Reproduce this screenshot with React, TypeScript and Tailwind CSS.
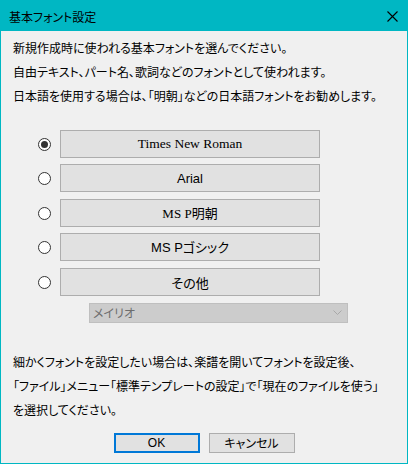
import { useState } from "react";

const jp = "font-['Noto_Sans_CJK_JP',sans-serif] [font-feature-settings:'palt']";

type Opt = { label: string; font: string; gap: string };

const options: Opt[] = [
  { label: "Times New Roman", font: "font-['Liberation_Serif',serif] text-[13.5px]", gap: "mt-0" },
  { label: "Arial", font: "font-['Liberation_Sans',sans-serif] text-[13px]", gap: "mt-[6px]" },
  { label: "MS P明朝", font: "font-['Liberation_Serif','Noto_Sans_CJK_JP',serif] text-[13px] [font-feature-settings:'palt']", gap: "mt-[7px]" },
  { label: "MS Pゴシック", font: "font-['Liberation_Sans','Noto_Sans_CJK_JP',sans-serif] text-[13px] [font-feature-settings:'palt']", gap: "mt-[6px]" },
  { label: "その他", font: `${jp} text-[13px]`, gap: "mt-[7px]" },
];

function Radio({ checked }: { checked: boolean }) {
  return (
    <span className="w-[13px] h-[13px] rounded-full border border-[#333333] bg-white flex items-center justify-center shrink-0">
      {checked && <span className="w-[7px] h-[7px] rounded-full bg-[#333333]" />}
    </span>
  );
}

export default function App() {
  const [selected, setSelected] = useState(0);

  return (
    <div className={`w-[408px] h-[464px] border border-[#00b7c3] bg-[#f0f0f0] flex flex-col text-black font-normal ${jp}`}>
      {/* タイトルバー */}
      <div className="h-[30px] bg-[#00b7c3] flex items-center justify-between pl-[8px] pr-[9px] shrink-0">
        <span className="text-[12px] leading-none pt-[1px]">基本フォント設定</span>
        <svg width="11" height="11" viewBox="0 0 11 11">
          <path d="M0.5 0.5 L10.5 10.5 M10.5 0.5 L0.5 10.5" stroke="#000" strokeWidth="1.1" />
        </svg>
      </div>

      {/* 説明 */}
      <div className="pt-[5px] pl-[12px] text-[12px] leading-[24px]">
        <p>新規作成時に使われる基本フォントを選んでください。</p>
        <p>自由テキスト、パート名、歌詞などのフォントとして使われます。</p>
        <p>日本語を使用する場合は、「明朝」などの日本語フォントをお勧めします。</p>
      </div>

      {/* フォント選択 */}
      <div className="mt-[22px] flex flex-col pl-[37px]">
        {options.map((o, i) => (
          <div key={o.label} className={`flex items-center gap-[9px] ${o.gap}`} onClick={() => setSelected(i)}>
            <Radio checked={selected === i} />
            <div
              className={`w-[260px] h-[28px] border border-[#adadad] bg-[#e1e1e1] font-normal leading-none flex items-center justify-center ${o.font}`}
            >
              {o.label}
            </div>
          </div>
        ))}
      </div>

      <div className="mt-[7px] ml-[88px] w-[259px] h-[20px] border border-[#bfbfbf] bg-[#cccccc] flex items-center justify-between pl-[3px] pr-[5px]">
        <span className="text-[12px] leading-none text-[#6d6d6d]">メイリオ</span>
        <svg width="9" height="6" viewBox="0 0 9 6">
          <path d="M0.5 0.5 L4.5 4.5 L8.5 0.5" fill="none" stroke="#a8a8a8" strokeWidth="1" />
        </svg>
      </div>

      {/* 注意書き */}
      <div className="mt-[27px] pl-[12px] text-[12px] leading-[24px]">
        <p>細かくフォントを設定したい場合は、楽譜を開いてフォントを設定後、</p>
        <p>「ファイル」メニュー「標準テンプレートの設定」で「現在のファイルを使う」</p>
        <p>を選択してください。</p>
      </div>

      <div className="mt-[11px] flex justify-center gap-[9px]">
        <div className="w-[86px] h-[20px] border-2 border-[#0078d7] bg-[#e1e1e1] text-[12px] leading-none font-normal font-['Liberation_Sans',sans-serif] flex items-center justify-center">
          OK
        </div>
        <div className="w-[86px] h-[20px] border border-[#adadad] bg-[#e1e1e1] text-[12px] leading-none font-normal flex items-center justify-center">
          キャンセル
        </div>
      </div>
    </div>
  );
}
